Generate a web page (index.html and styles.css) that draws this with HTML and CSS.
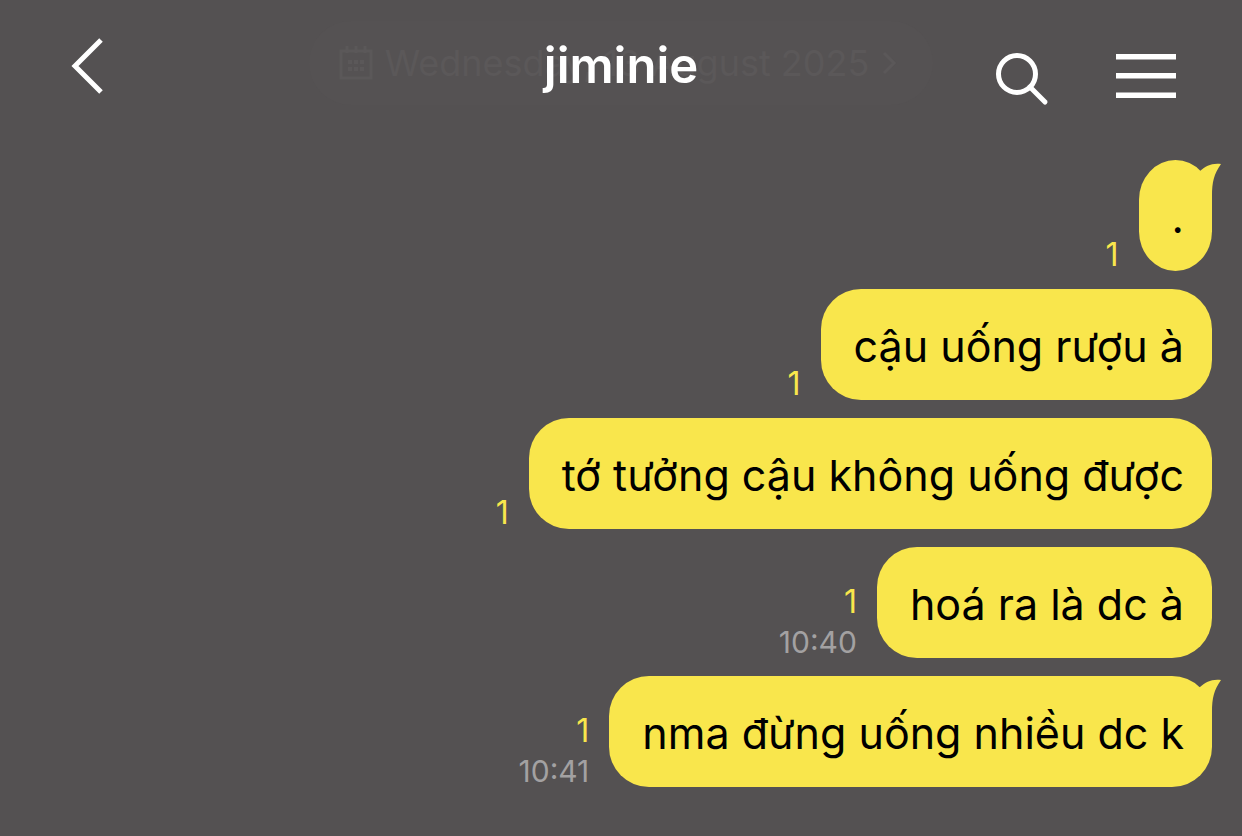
FILE: index.html
```html
<!DOCTYPE html>
<html lang="vi">
  <head>
    <meta charset="UTF-8" />
    <meta name="viewport" content="width=device-width, initial-scale=1.0" />
    <title>jiminie</title>
    <link rel="stylesheet" href="styles.css">
  </head>
  <body>
    <header class="header">
      <button class="icon-btn back" type="button" aria-label="Back">
        <svg width="36" height="60" viewBox="0 0 36 60" fill="none" stroke="#fff" stroke-width="5">
          <path d="M32 4 L6 30 L32 56" />
        </svg>
      </button>
      <div class="date">
        <svg width="34" height="36" viewBox="0 0 34 36" fill="none" stroke="currentColor" stroke-width="3">
          <path d="M2 6 H32 V33 H2 Z M8 1 V8 M17 1 V8 M26 1 V8" />
          <path d="M9 17 H25 M9 24 H25" stroke-dasharray="4 2" stroke-width="4" />
        </svg>
        <span>Wednesday, 13 August 2025</span>
        <svg width="16" height="24" viewBox="0 0 16 24" fill="none" stroke="currentColor" stroke-width="3">
          <path d="M3 2 L13 12 L3 22" />
        </svg>
      </div>
      <h1 class="title">jiminie</h1>
      <div class="actions">
        <button class="icon-btn" type="button" aria-label="Search">
          <svg width="54" height="54" viewBox="0 0 54 54" fill="none" stroke="#fff" stroke-width="5">
            <circle cx="21" cy="22" r="18.5" />
            <path d="M34 35 L49 50" stroke-linecap="round" />
          </svg>
        </button>
        <button class="icon-btn" type="button" aria-label="Menu">
          <svg width="60" height="54" viewBox="0 0 60 54" fill="#fff">
            <path d="M0 2 H60 V7.5 H0 Z M0 21 H60 V26.5 H0 Z M0 40.5 H60 V46 H0 Z" />
          </svg>
        </button>
      </div>
    </header>

    <main class="chat">
      <div class="message">
        <div class="meta"><span class="unread">1</span></div>
        <div class="bubble short">.
          <svg class="tail" width="36" height="44" viewBox="0 0 36 44">
            <path d="M6 16 L14 11 C20 6 25 3 35 4 C28 14 26 22 26 36 L26 44 L6 44 Z" />
          </svg>
        </div>
      </div>
      <div class="message">
        <div class="meta"><span class="unread">1</span></div>
        <div class="bubble">cậu uống rượu à</div>
      </div>
      <div class="message">
        <div class="meta"><span class="unread">1</span></div>
        <div class="bubble">tớ tưởng cậu không uống được</div>
      </div>
      <div class="message">
        <div class="meta"><span class="unread">1</span><time>10:40</time></div>
        <div class="bubble">hoá ra là dc à</div>
      </div>
      <div class="message">
        <div class="meta"><span class="unread">1</span><time>10:41</time></div>
        <div class="bubble">nma đừng uống nhiều dc k
          <svg class="tail" width="36" height="44" viewBox="0 0 36 44">
            <path d="M6 16 L14 11 C20 6 25 3 35 4 C28 14 26 22 26 36 L26 44 L6 44 Z" />
          </svg>
        </div>
      </div>
    </main>
  </body>
</html>
```

FILE: styles.css
```css
* {
  box-sizing: border-box;
}
body {
  margin: 0;
  background: #545152;
  font-family: Inter, "Noto Sans", sans-serif;
}
.header {
  display: grid;
  grid-template-columns: 1fr auto 1fr;
  align-items: center;
  height: 160px;
  padding: 0 66px 34px;
}
.icon-btn {
  padding: 0;
  border: 0;
  background: none;
  cursor: pointer;
}
.icon-btn svg {
  display: block;
}
.back {
  grid-area: 1 / 1;
  justify-self: start;
  padding: 6px 0 0 3px;
}
.date {
  grid-area: 1 / 2;
  display: flex;
  align-items: center;
  gap: 12px;
  height: 84px;
  padding: 0 36px 0 30px;
  border-radius: 42px;
  background: #555253;
  color: #5b5859;
  font-size: 36px;
  white-space: nowrap;
}
.title {
  grid-area: 1 / 2;
  justify-self: center;
  margin: 0;
  padding-top: 6px;
  color: #fff;
  font-size: 49px;
  font-weight: 600;
  line-height: 60px;
}
.actions {
  grid-area: 1 / 3;
  justify-self: end;
  display: flex;
  gap: 66px;
  padding-top: 32px;
}
.chat {
  display: flex;
  flex-direction: column;
  gap: 18px;
  padding: 0 30px 48px;
}
.message {
  display: flex;
  justify-content: flex-end;
  align-items: flex-end;
  gap: 20px;
}
.meta {
  display: flex;
  flex-direction: column;
  align-items: flex-end;
  margin-bottom: -4px;
  color: #a3a1a2;
  font-size: 30px;
  line-height: 40px;
}
.unread {
  color: #f9e64c;
  font-size: 32px;
}
.bubble {
  position: relative;
  padding: 29px 28px 26px 33px;
  border-radius: 40px;
  background: #f9e64c;
  color: #000;
  font-size: 43px;
  line-height: 56px;
}
.short {
  border-radius: 50% / 40px;
}
.tail {
  position: absolute;
  top: 0;
  right: -10px;
  fill: #f9e64c;
}
```
